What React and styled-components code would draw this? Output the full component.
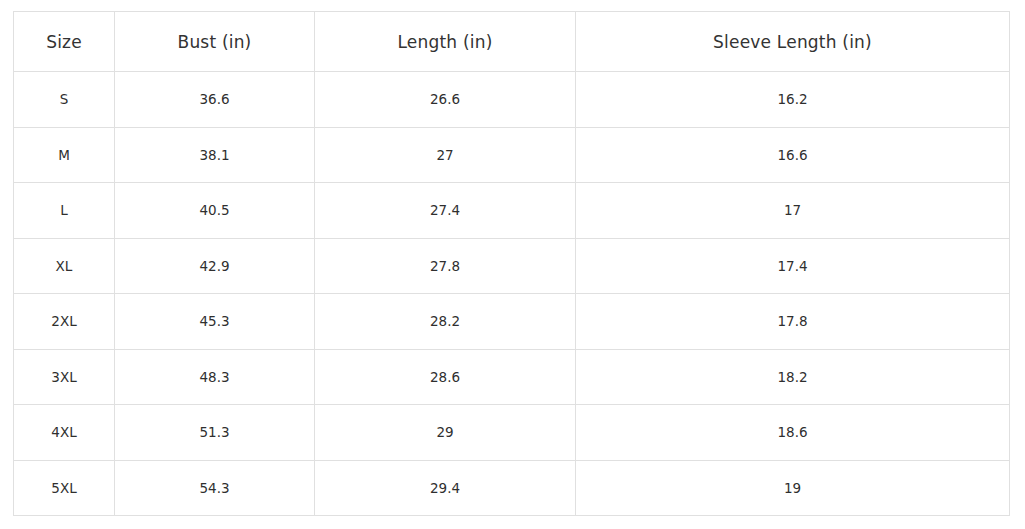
import React from 'react'
import styled, { createGlobalStyle } from 'styled-components'

const GlobalStyle = createGlobalStyle`
  html, body {
    margin: 0;
    padding: 0;
    background: #fff;
  }
  body {
    font-family: 'DejaVu Sans', 'Open Sans', sans-serif;
    color: #333;
  }
`

const Page = styled.div`
  padding: 11px 15px 0 13px;
`

const Table = styled.table`
  width: 996px;
  border-collapse: collapse;
  table-layout: fixed;
`

const HeadCell = styled.th`
  height: 59px;
  padding: 0;
  border: 1px solid #e0e0e0;
  font-size: 17px;
  font-weight: normal;
  color: #333;
  text-align: center;
  vertical-align: middle;
  letter-spacing: 0.2px;
`

const Cell = styled.td`
  height: 54.5px;
  padding: 0;
  border: 1px solid #e0e0e0;
  font-size: 13.5px;
  color: #2f2f2f;
  text-align: center;
  vertical-align: middle;
`

const columns = [
  { label: 'Size', width: 101 },
  { label: 'Bust (in)', width: 200 },
  { label: 'Length (in)', width: 261 },
  { label: 'Sleeve Length (in)', width: 434 },
]

const rows = [
  ['S', '36.6', '26.6', '16.2'],
  ['M', '38.1', '27', '16.6'],
  ['L', '40.5', '27.4', '17'],
  ['XL', '42.9', '27.8', '17.4'],
  ['2XL', '45.3', '28.2', '17.8'],
  ['3XL', '48.3', '28.6', '18.2'],
  ['4XL', '51.3', '29', '18.6'],
  ['5XL', '54.3', '29.4', '19'],
]

const App = () => (
  <Page>
    <GlobalStyle />
    <Table>
      <colgroup>
        {columns.map((c) => (
          <col key={c.label} style={{ width: c.width }} />
        ))}
      </colgroup>
      <thead>
        <tr>
          {columns.map((c) => (
            <HeadCell key={c.label}>{c.label}</HeadCell>
          ))}
        </tr>
      </thead>
      <tbody>
        {rows.map((r) => (
          <tr key={r[0]}>
            {r.map((v, i) => (
              <Cell key={i}>{v}</Cell>
            ))}
          </tr>
        ))}
      </tbody>
    </Table>
  </Page>
)

export default App
